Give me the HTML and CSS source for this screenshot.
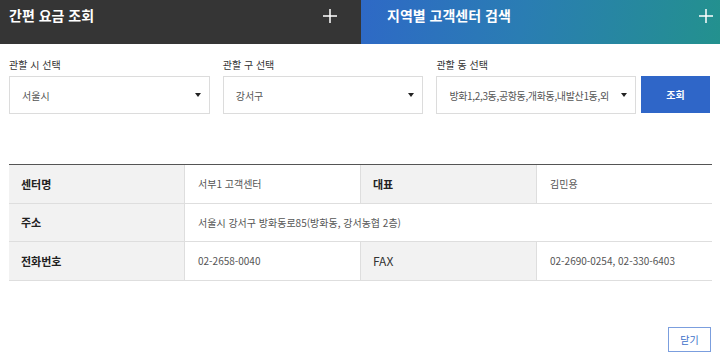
FILE: index.html
```html
<!DOCTYPE html>
<html lang="ko">
<head>
<meta charset="utf-8">
<link rel="stylesheet" href="styles.css">
</head>
<body>
<div class="tabs">
  <div class="tab tab-dark">
    <span class="tab-title">간편 요금 조회</span>
    <svg class="plus" width="14" height="14" viewBox="0 0 14 14"><path d="M7 0V14M0 7H14" stroke="#fff" stroke-width="1.5"/></svg>
  </div>
  <div class="tab tab-blue">
    <span class="tab-title">지역별 고객센터 검색</span>
    <svg class="plus" width="14" height="14" viewBox="0 0 14 14"><path d="M7 0V14M0 7H14" stroke="#fff" stroke-width="1.5"/></svg>
  </div>
</div>

<div class="form">
  <div class="field">
    <div class="label">관할 시 선택</div>
    <div class="select"><span class="sel-text">서울시</span><span class="arrow"></span></div>
  </div>
  <div class="field">
    <div class="label">관할 구 선택</div>
    <div class="select"><span class="sel-text">강서구</span><span class="arrow"></span></div>
  </div>
  <div class="field field-wide">
    <div class="label">관할 동 선택</div>
    <div class="select"><span class="sel-text sel-tight">방화1,2,3동,공항동,개화동,내발산1동,외</span><span class="arrow"></span></div>
  </div>
  <button class="btn-search">조회</button>
</div>

<div class="info">
  <div class="row">
    <div class="th">센터명</div>
    <div class="td">서부1 고객센터</div>
    <div class="th">대표</div>
    <div class="td">김민용</div>
  </div>
  <div class="row">
    <div class="th">주소</div>
    <div class="td span3">서울시 강서구 방화동로85(방화동, 강서농협 2층)</div>
  </div>
  <div class="row">
    <div class="th">전화번호</div>
    <div class="td">02-2658-0040</div>
    <div class="th th-latin">FAX</div>
    <div class="td">02-2690-0254, 02-330-6403</div>
  </div>
</div>

<div class="footer">
  <button class="btn-close">닫기</button>
</div>
</body>
</html>
```
FILE: styles.css
```css
* { box-sizing: border-box; }
body {
  margin: 0;
  width: 720px;
  height: 360px;
  overflow: hidden;
  background: #fff;
  font-family: "Noto Sans CJK KR", "Noto Sans", sans-serif;
  color: #333;
}
.tabs {
  display: flex;
  height: 44px;
}
.tab {
  display: flex;
  justify-content: space-between;
  align-items: flex-start;
  padding-top: 6px;
}
.tab-dark {
  width: 361px;
  background: #353535;
  padding-left: 9px;
  padding-right: 24px;
}
.tab-blue {
  flex: 1;
  background: linear-gradient(100deg, #2e69c6 0%, #2a7db3 45%, #23918e 100%);
  padding-left: 26px;
  padding-right: 7px;
}
.tab-title {
  color: #fff;
  font-size: 14px;
  font-weight: bold;
  line-height: 18px;
}
.plus {
  margin-top: 3px;
}

.form {
  display: flex;
  align-items: flex-end;
  gap: 13px;
  padding: 14px 10px 0 9px;
}
.field {
  width: 201px;
}
.field-wide {
  width: 200px;
}
.label {
  font-size: 10px;
  line-height: 14px;
  color: #333;
  margin-bottom: 4px;
}
.select {
  height: 38px;
  border: 1px solid #dcdcdc;
  display: flex;
  align-items: center;
  justify-content: space-between;
  padding: 0 8px 0 12px;
  gap: 5px;
}
.sel-text {
  font-size: 10px;
  color: #555;
  white-space: nowrap;
  overflow: hidden;
}
.sel-tight {
  letter-spacing: -0.35px;
}
.arrow {
  flex: none;
  width: 0;
  height: 0;
  border-left: 3px solid transparent;
  border-right: 3px solid transparent;
  border-top: 4px solid #222;
}
.btn-search {
  width: 69px;
  height: 37px;
  margin-left: -8px;
  margin-bottom: 1px;
  border: none;
  background: #2f66c8;
  color: #fff;
  font-family: inherit;
  font-size: 10px;
  font-weight: bold;
  padding: 0;
}

.info {
  margin: 50px 8px 0 9px;
  border-top: 1px solid #555;
}
.row {
  display: grid;
  grid-template-columns: 176px 176px 176px 1fr;
  height: 38.5px;
  border-bottom: 1px solid #dedede;
}
.th, .td {
  display: flex;
  align-items: center;
  padding-left: 12px;
}
.th {
  background: #f2f2f2;
  font-size: 11px;
  font-weight: bold;
  color: #222;
  border-right: 1px solid #dedede;
}
.th-latin {
  font-weight: normal;
  font-size: 12px;
  color: #333;
}
.td {
  font-size: 10px;
  color: #555;
  border-right: 1px solid #dedede;
  padding-left: 13px;
}
.td:last-child {
  border-right: none;
}
.span3 {
  grid-column: 2 / 5;
}
.footer {
  display: flex;
  justify-content: flex-end;
  padding: 46px 9px 0 0;
}
.btn-close {
  width: 43px;
  height: 25px;
  border: 1px solid #7b9ede;
  background: #fff;
  color: #3d6fc9;
  font-family: inherit;
  font-size: 10px;
  padding: 0;
}
```
